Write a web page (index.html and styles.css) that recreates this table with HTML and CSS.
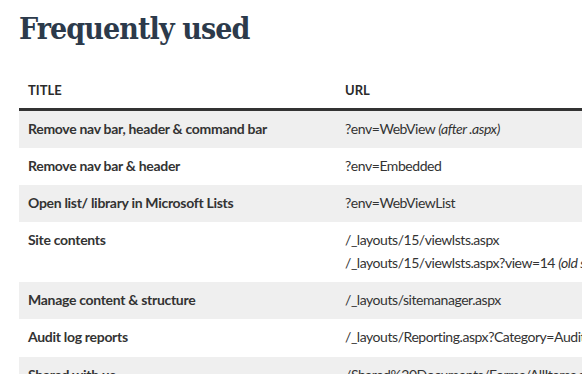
FILE: index.html
```html
<!DOCTYPE html>
<html>
<head>
<meta charset="utf-8">
<link rel="stylesheet" href="styles.css">
</head>
<body>
<main class="page">
  <h1 class="title">Frequently used</h1>
  <table class="urls">
    <thead>
      <tr>
        <th class="col-title">TITLE</th>
        <th class="col-url">URL</th>
      </tr>
    </thead>
    <tbody>
      <tr class="odd">
        <td class="name">Remove nav bar, header &amp; command bar</td>
        <td class="url">?env=WebView <em>(after .aspx)</em></td>
      </tr>
      <tr>
        <td class="name">Remove nav bar &amp; header</td>
        <td class="url">?env=Embedded</td>
      </tr>
      <tr class="odd">
        <td class="name">Open list/ library in Microsoft Lists</td>
        <td class="url">?env=WebViewList</td>
      </tr>
      <tr>
        <td class="name">Site contents</td>
        <td class="url">/_layouts/15/viewlsts.aspx<br>/_layouts/15/viewlsts.aspx?view=14 <em>(old style)</em></td>
      </tr>
      <tr class="odd">
        <td class="name">Manage content &amp; structure</td>
        <td class="url">/_layouts/sitemanager.aspx</td>
      </tr>
      <tr>
        <td class="name">Audit log reports</td>
        <td class="url">/_layouts/Reporting.aspx?Category=AuditSiteCollection</td>
      </tr>
      <tr class="odd">
        <td class="name">Shared with us</td>
        <td class="url">/Shared%20Documents/Forms/AllItems.aspx</td>
      </tr>
    </tbody>
  </table>
</main>
</body>
</html>
```

FILE: styles.css
```css
html, body {
  margin: 0;
  padding: 0;
  overflow: hidden;
  background: #ffffff;
}

.page {
  padding: 11px 0 0 19px;
}

.title {
  margin: 0 0 25px 0;
  font-family: "DejaVu Serif Condensed", "DejaVu Serif", serif;
  font-stretch: semi-condensed;
  font-weight: bold;
  font-size: 30px;
  line-height: 36px;
  letter-spacing: -0.9px;
  color: #2c3a4b;
}

.urls {
  border-collapse: collapse;
  width: 760px;
  font-family: Lato, "Open Sans", sans-serif;
  font-size: 14px;
  color: #333333;
}

.urls th {
  text-align: left;
  font-weight: bold;
  font-size: 13px;
  height: 37px;
  padding: 0 9px;
  box-sizing: border-box;
  border-bottom: 3px solid #333333;
  color: #2b2b2b;
  vertical-align: middle;
}

.col-title {
  width: 317px;
}

.urls td {
  padding: 7px 9px 7.8px;
  line-height: 22.5px;
  vertical-align: top;
  white-space: nowrap;
}

.urls tr.odd td {
  background: #efefef;
}

.name {
  font-weight: bold;
  letter-spacing: -0.3px;
}

.url {
  letter-spacing: -0.45px;
}

.url em {
  font-style: italic;
}
```
